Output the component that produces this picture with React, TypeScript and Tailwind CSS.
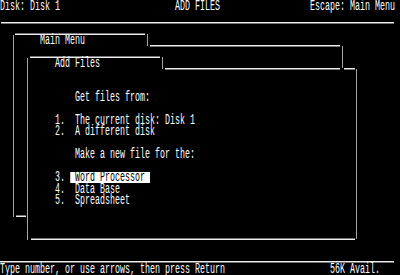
import type { ReactNode } from "react";

// 80 x 24 character screen, each cell 5px wide and ~11.46px tall
const ROW =
  "w-[672px] h-[11.46px] pt-[0.5px] leading-[11.46px] whitespace-pre origin-left scale-x-[0.5951]";

function line(...segs: [number, string][]): string {
  return segs.reduce((s, [col, text]) => s.padEnd(col) + text, "");
}

const rows: Record<number, ReactNode> = {
  0: line([0, "Disk: Disk 1"], [35, "ADD FILES"], [62, "Escape: Main Menu"]),
  3: line([8, "Main Menu"]),
  5: line([11, "Add Files"]),
  8: line([15, "Get files from:"]),
  10: line([11, "1."], [15, "The current disk: Disk 1"]),
  11: line([11, "2."], [15, "A different disk"]),
  13: line([15, "Make a new file for the:"]),
  15: (
    <>
      {line([11, "3."]).padEnd(14)}
      <span className="inline-block h-[11.46px] -mt-[0.5px] pt-[0.5px] align-top bg-white text-black">
        {" Word Processor "}
      </span>
    </>
  ),
  16: line([11, "4."], [15, "Data Base"]),
  17: line([11, "5."], [15, "Spreadsheet"]),
  23: line(
    [0, "Type number, or use arrows, then press Return"],
    [66, "56K Avail."],
  ),
};

// box-drawing strokes: [x, y, w, h]
const hLines: [number, number, number, number][] = [
  [1, 22, 393, 1.5],
  [15, 33.5, 130, 1.5],
  [150, 45, 190, 1.5],
  [30, 56.5, 130, 1.5],
  [165, 68, 175, 1.5],
  [344, 68, 11, 1.5],
  [16, 215.5, 10, 1.5],
  [31, 238.5, 324, 1.5],
  [0, 261, 394, 1.5],
];

const vLines: [number, number, number, number][] = [
  [13, 35, 1, 182],
  [147, 34, 1, 12],
  [342, 46, 1, 22],
  [27, 58, 1, 182],
  [162, 57, 1, 12],
  [356, 69, 1, 170],
];

function Frames() {
  return (
    <svg
      className="absolute inset-0 pointer-events-none"
      width={400}
      height={275}
      viewBox="0 0 400 275"
    >
      {hLines.map(([x, y, w, h], i) => (
        <rect key={`h${i}`} x={x} y={y} width={w} height={h} fill="#ececec" />
      ))}
      {vLines.map(([x, y, w, h], i) => (
        <rect key={`v${i}`} x={x} y={y} width={w} height={h} fill="#a4a4a4" />
      ))}
    </svg>
  );
}

export default function App() {
  return (
    <div className="relative w-[400px] h-[275px] overflow-hidden bg-black text-white font-['Liberation_Mono',monospace] text-[14px]">
      {Array.from({ length: 24 }, (_, i) => (
        <div key={i} className={ROW}>
          {rows[i] ?? ""}
        </div>
      ))}
      <Frames />
    </div>
  );
}
